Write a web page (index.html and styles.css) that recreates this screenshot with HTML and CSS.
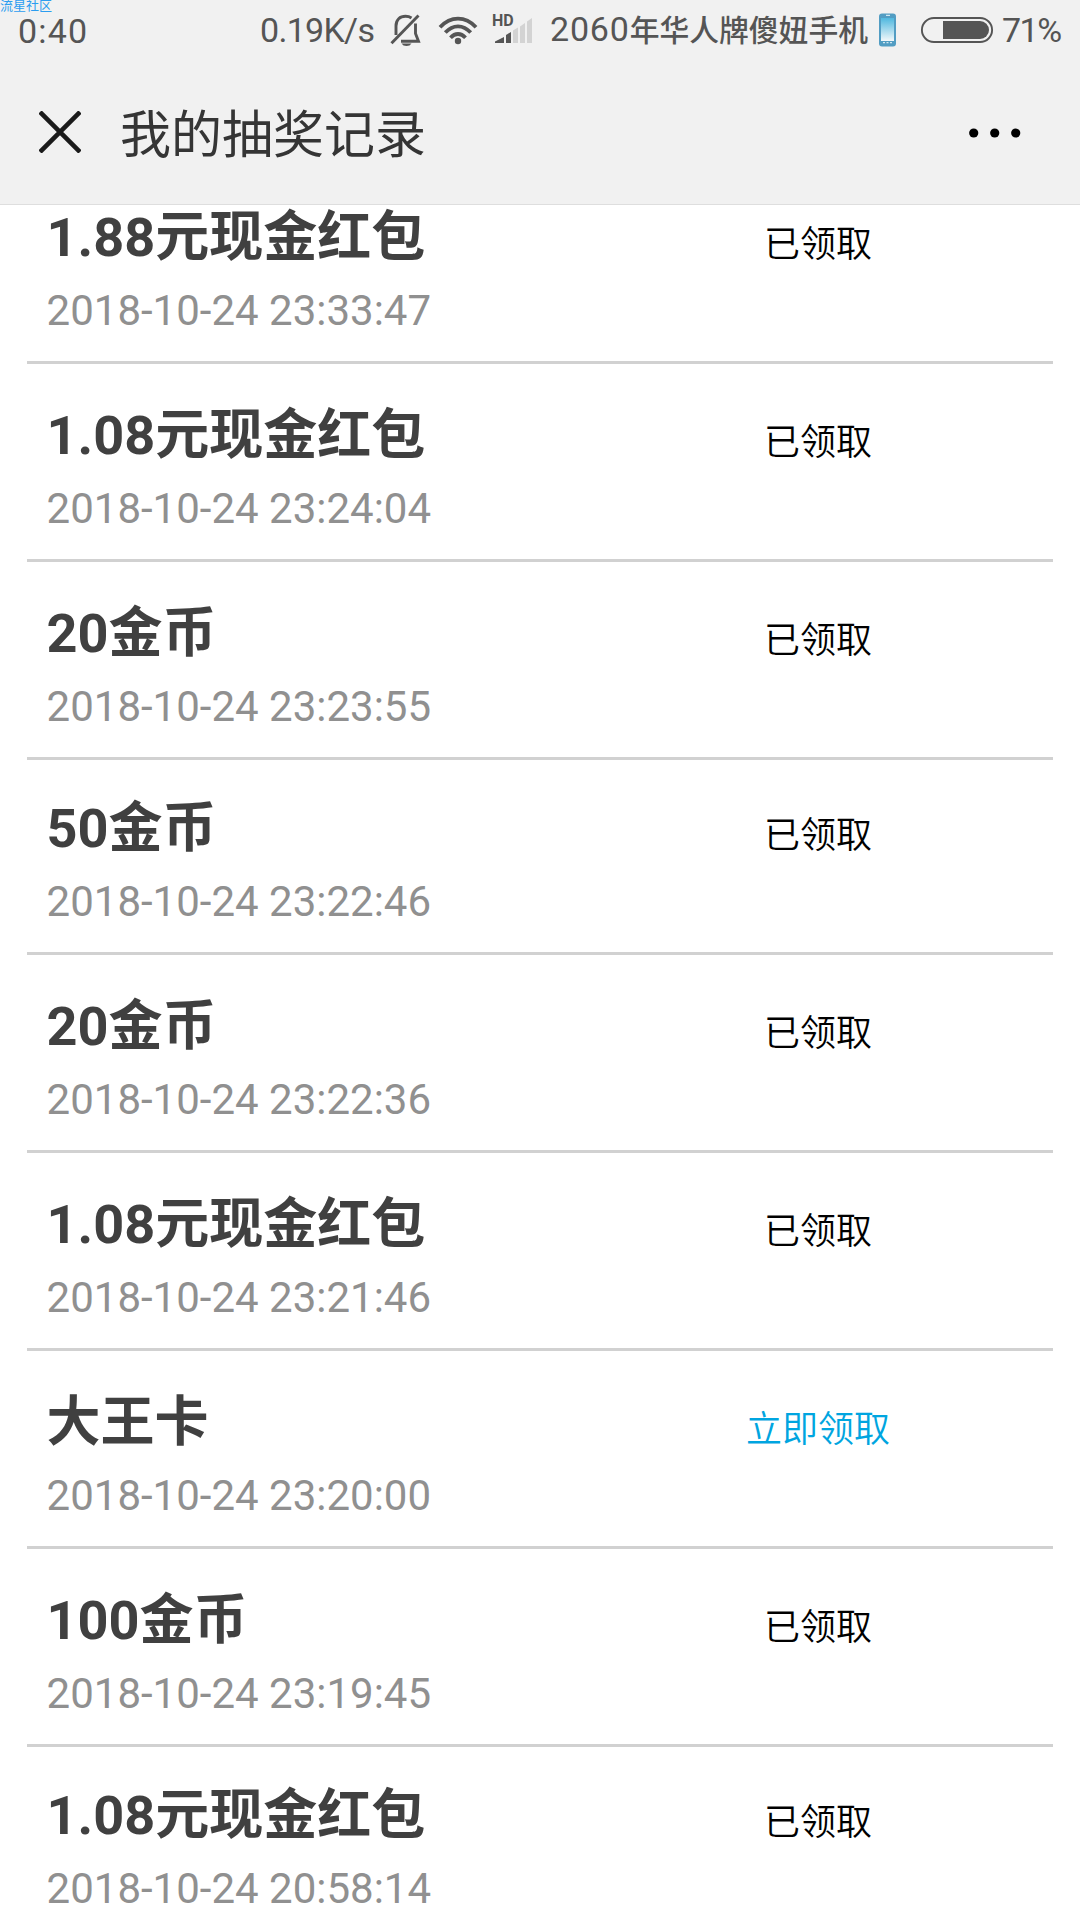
FILE: index.html
```html
<!DOCTYPE html>
<html lang="zh-CN">
<head>
  <meta charset="UTF-8">
  <meta name="viewport" content="width=device-width, initial-scale=1.0">
  <title>我的抽奖记录</title>
  <link rel="stylesheet" href="styles.css">
</head>
<body>

  <!-- Header -->
  <header class="header">
    <span class="watermark">流星社区</span>

    <div class="status-bar">
      <span class="time">0:40</span>
      <span class="speed">0.19K/s</span>
      <svg class="icon" width="32" height="34" viewBox="0 0 32 34" fill="none" stroke="#555" stroke-width="2.9">
        <path d="M6 22V13C6 6.500 10 3.300 15.500 3.300Q19 3.300 21.500 5"/>
        <path d="M25.500 10.500V20.500L28.500 28.300H11"/>
        <path d="M1.500 30.200L28.500 2.500"/>
        <path d="M11.500 30.500H21.500Q20 33 16.500 33T11.500 30.500Z" fill="#555" stroke="none"/>
      </svg>
      <svg class="icon" width="40" height="34" viewBox="0 0 40 34" fill="none" stroke="#555" stroke-width="3.800">
        <path d="M2 14.200Q10 5.600 20 5.600T38 14.200"/>
        <path d="M7.300 19.600Q13 13.300 20 13.300T32.700 19.600"/>
        <path d="M12.500 24.800Q16 21 20 21T27.500 24.800"/>
        <circle cx="20" cy="28" r="3.200" fill="#555" stroke="none"/>
      </svg>
      <div class="signal">
        <span class="hd">HD</span>
        <svg class="icon" width="42" height="34" viewBox="0 0 42 34">
          <path d="M3 30V28.500L12 24V30Z" fill="#555"/>
          <path d="M14 30V22L19 19V30Z" fill="#555"/>
          <path d="M21 30V17.500L26 14.500V30ZM28 30V13.500L33 10V30ZM35 30V8.500L40 5V30Z" fill="#d3d3d3"/>
        </svg>
      </div>
      <span class="carrier"><span class="year">2060</span>年华人牌傻妞手机</span>
      <svg class="icon" width="18" height="34" viewBox="0 0 18 34">
        <defs>
          <linearGradient id="screen" x1="0" y1="0" x2="0" y2="1">
            <stop offset="0" stop-color="#4fb8df"/>
            <stop offset="1" stop-color="#f3f8fa"/>
          </linearGradient>
        </defs>
        <rect x="0" y="0.500" width="17" height="33" rx="3" fill="#529dc3"/>
        <rect x="2" y="5" width="13" height="23" fill="url(#screen)"/>
        <path d="M7 2.300H11M4 29.700H6M7.500 29.700H9.500M11 29.700H13" stroke="#cfe6f0" stroke-width="1.200"/>
      </svg>
      <svg class="icon" width="74" height="28" viewBox="0 0 74 28">
        <rect x="1.900" y="2" width="70.200" height="24" rx="12" fill="none" stroke="#555" stroke-width="1.900"/>
        <path d="M23 5H60A9 9 0 0 1 60 23H23Z" fill="#555"/>
      </svg>
      <span class="percent">71%</span>
    </div>

    <div class="nav">
      <svg class="close" width="42" height="42" viewBox="0 0 42 42">
        <path d="M1 1L41 41M41 1L1 41" stroke="#1a1a1a" stroke-width="4.6"/>
      </svg>
      <h1>我的抽奖记录</h1>
      <svg class="more" width="52" height="10" viewBox="0 0 52 10">
        <circle cx="4.700" cy="5" r="4.600"/>
        <circle cx="25.700" cy="5" r="4.600"/>
        <circle cx="46.700" cy="5" r="4.600"/>
      </svg>
    </div>
  </header>

  <!-- Record list -->
  <ul class="records">
    <li class="record">
      <div class="prize"><h2>1.88元现金红包</h2><p>2018-10-24 23:33:47</p></div>
      <span class="state">已领取</span>
    </li>
    <li class="record">
      <div class="prize"><h2>1.08元现金红包</h2><p>2018-10-24 23:24:04</p></div>
      <span class="state">已领取</span>
    </li>
    <li class="record">
      <div class="prize"><h2>20金币</h2><p>2018-10-24 23:23:55</p></div>
      <span class="state">已领取</span>
    </li>
    <li class="record short">
      <div class="prize"><h2>50金币</h2><p>2018-10-24 23:22:46</p></div>
      <span class="state">已领取</span>
    </li>
    <li class="record">
      <div class="prize"><h2>20金币</h2><p>2018-10-24 23:22:36</p></div>
      <span class="state">已领取</span>
    </li>
    <li class="record">
      <div class="prize"><h2>1.08元现金红包</h2><p>2018-10-24 23:21:46</p></div>
      <span class="state">已领取</span>
    </li>
    <li class="record">
      <div class="prize"><h2>大王卡</h2><p>2018-10-24 23:20:00</p></div>
      <a class="state link">立即领取</a>
    </li>
    <li class="record">
      <div class="prize"><h2>100金币</h2><p>2018-10-24 23:19:45</p></div>
      <span class="state">已领取</span>
    </li>
    <li class="record short">
      <div class="prize"><h2>1.08元现金红包</h2><p>2018-10-24 20:58:14</p></div>
      <span class="state">已领取</span>
    </li>
  </ul>

</body>
</html>
```
FILE: styles.css
```css
* {
  box-sizing: border-box;
}
html {
  overflow: hidden;
}
body {
  width: 1080px;
  height: 1920px;
  margin: 0;
  overflow: hidden;
  background-color: #fff;
  font-family: Roboto, "Noto Sans CJK SC", sans-serif;
}
h1, h2, p, ul {
  margin: 0;
  padding: 0;
}

/* Header */
.header {
  position: relative;
  z-index: 1;
  height: 205px;
  background-color: #f1f1f1;
  border-bottom: 1px solid #dedede;
}
.watermark {
  position: absolute;
  top: -1px;
  left: 0;
  font-size: 13px;
  line-height: 13px;
  color: #2b9df0;
}
.status-bar {
  display: grid;
  grid-template-columns: 242px 130px 48px 54px 58px 329px 41px 82px auto;
  align-items: center;
  height: 60px;
  padding-left: 18px;
  font-size: 34px;
  line-height: 40px;
  color: #555;
  white-space: nowrap;
}
.icon {
  display: block;
}
.time {
  padding-top: 2px;
  letter-spacing: 1.2px;
}
.speed {
  letter-spacing: -0.7px;
}
.carrier {
  font-size: 29.8px;
  font-weight: 500;
}
.year {
  font-size: 34px;
  font-weight: 400;
  letter-spacing: 0.8px;
}
.percent {
  letter-spacing: -1.5px;
}
.signal {
  position: relative;
}
.hd {
  position: absolute;
  top: 1px;
  left: 0;
  font-size: 16px;
  font-weight: bold;
  line-height: 13px;
}

/* Title row */
.nav {
  display: flex;
  align-items: center;
  height: 145px;
  padding: 0 59px 0 39px;
}
.close {
  margin-top: -2px;
}
.nav h1 {
  flex: 1;
  margin-left: 39px;
  padding-top: 6px;
  font-size: 51px;
  font-weight: 400;
  line-height: 60px;
  color: #353535;
}
.more {
  margin-top: 1px;
}

/* Records, scrolled partly under the header */
.records {
  margin: -39px 27px 0;
  list-style: none;
}
.record {
  display: grid;
  grid-template-columns: 556px 470px;
  align-items: start;
  height: 198px;
  padding-top: 42px;
  border-bottom: 3px solid #d1d1d1;
}
.record.short {
  height: 195px;
  padding-top: 39px;
}
.prize {
  padding-left: 19.6px;
}
.prize h2 {
  font-size: 54px;
  line-height: 60px;
  color: #404040;
}
.prize p {
  margin-top: 18px;
  font-size: 42px;
  line-height: 50px;
  color: #909090;
}
.state {
  padding-top: 12px;
  font-size: 36px;
  font-weight: 350;
  line-height: 50px;
  text-align: center;
  color: #000;
}
.state.link {
  color: #00a5e0;
}
```
